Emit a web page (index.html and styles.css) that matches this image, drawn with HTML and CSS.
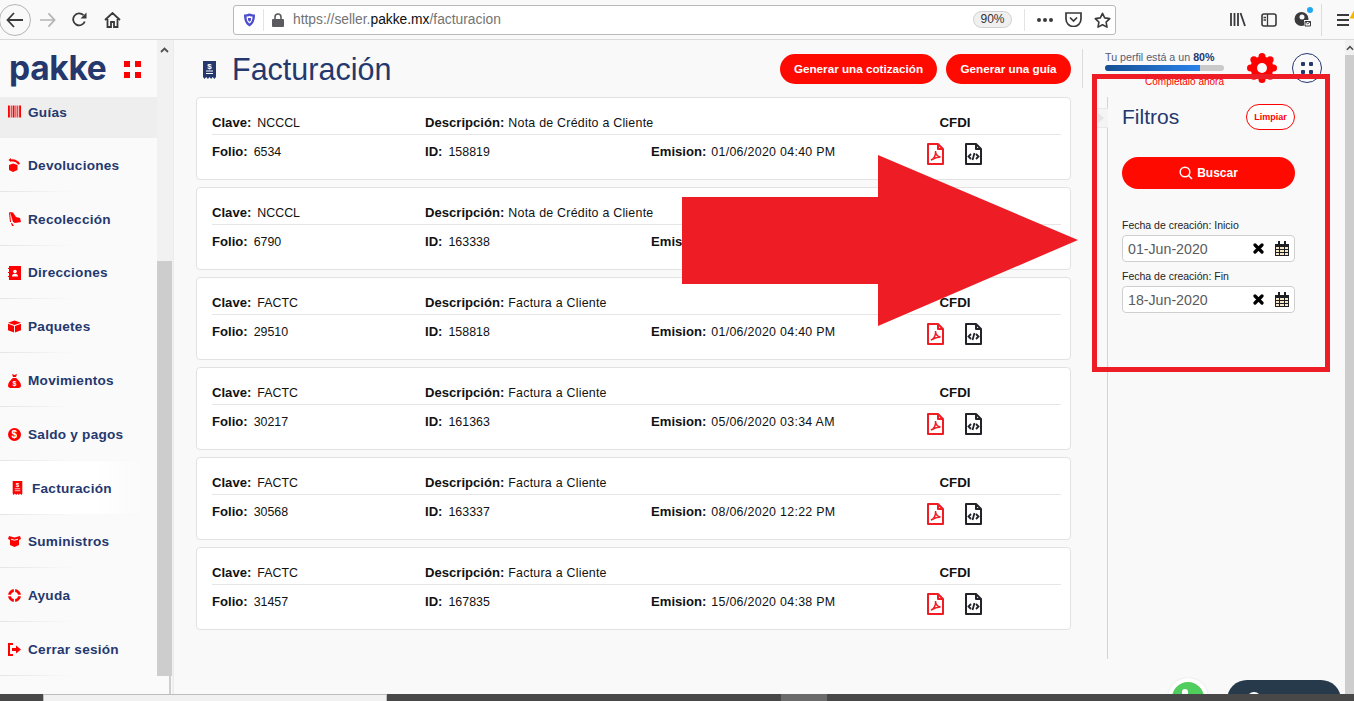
FILE: index.html
```html
<!DOCTYPE html>
<html lang="es">
<head>
<meta charset="utf-8">
<title>Facturación</title>
<link rel="stylesheet" href="styles.css">
</head>
<body>
<svg class="defs" width="0" height="0">
  <defs>
    <symbol id="pdf" viewBox="0 0 17 22">
      <path d="M1 1h10l5 5v15H1z M11 1v5h5" fill="none" stroke="currentColor" stroke-width="2" stroke-linejoin="round"/>
      <path d="M4 17c3-1 5-5 4.500-9 0 3 2 5.500 5 6-3 0-6 1-9.500 3z" fill="none" stroke="currentColor" stroke-width="1.500"/>
    </symbol>
    <symbol id="xml" viewBox="0 0 17 22">
      <path d="M1 1h10l5 5v15H1z M11 1v5h5" fill="none" stroke="currentColor" stroke-width="2" stroke-linejoin="round"/>
      <path d="M6 11l-2.500 2.500L6 16M11 11l2.500 2.500L11 16M9.500 10l-2 7" fill="none" stroke="currentColor" stroke-width="1.800"/>
    </symbol>
    <symbol id="receipt" viewBox="0 0 13 18">
      <path d="M0 0h13v16l-1.600 2-1.700-2-1.600 2-1.600-2-1.600 2-1.700-2L1.600 18 0 16z" fill="currentColor"/>
      <path d="M3 10h7M3 12.500h7" stroke="#fff" stroke-width="1"/>
      <text x="6.500" y="7.500" class="receipt-s">$</text>
    </symbol>
    <symbol id="cal" viewBox="0 0 14 15">
      <path d="M0 3h14v12H0z" fill="#1c2024"/>
      <path d="M1 6h3v2H1zM5 6h4v2H5zM10 6h3v2h-3zM1 9h3v2H1zM5 9h4v2H5zM10 9h3v2h-3zM1 12h3v2H1zM5 12h4v2H5zM10 12h3v2h-3z" fill="#f6e6c8"/>
      <path d="M3 0h2v4H3zM9 0h2v4H9z" fill="#1c2024"/>
    </symbol>
    <symbol id="cross" viewBox="0 0 11 11">
      <path d="M2 2l7 7M9 2l-7 7" stroke="#000" stroke-width="3.200" stroke-linecap="round"/>
    </symbol>
  </defs>
</svg>

<header class="toolbar">
  <div class="nav-group">
    <button class="back" aria-label="Atrás">
      <svg width="18" height="16" viewBox="0 0 18 16"><path d="M8 1L1.500 8 8 15M2 8h15" fill="none" stroke="#3a3a3c" stroke-width="1.800"/></svg>
    </button>
    <svg class="forward" width="17" height="16" viewBox="0 0 18 16"><path d="M10 1l6.500 7-6.500 7M16 8H1" fill="none" stroke="#b4b4b6" stroke-width="1.800"/></svg>
    <svg class="reload" width="15" height="15" viewBox="0 0 15 15"><path d="M12.800 9.500A6 6 0 1 1 11.500 3.200" fill="none" stroke="#3a3a3c" stroke-width="1.800"/><path d="M14.500 0.500v6h-6z" fill="#3a3a3c"/></svg>
    <svg class="home" width="17" height="16" viewBox="0 0 17 16"><path d="M1 8l7.500-7L16 8M3.500 7v8h3.500v-5h3v5h3.500V7" fill="none" stroke="#3a3a3c" stroke-width="1.800"/></svg>
  </div>
  <div class="urlbar">
    <svg class="shield" width="13" height="14" viewBox="0 0 13 14"><path d="M1 1.500C3 1.500 5 1 6.500.5 8 1 10 1.500 12 1.500c0 6-1.500 9.500-5.500 12C2.500 11 1 7.500 1 1.500z" fill="#4d4dd0"/><path d="M3.500 3.500c1 0 2-.3 3-.6 1 .3 2 .6 3 .6 0 3.500-.8 5.500-3 7-2.200-1.500-3-3.500-3-7z" fill="#fff"/><path d="M5 5h3v1.500c0 1-.5 1.700-1.500 2.300C5.500 8.200 5 7.500 5 6.500z" fill="#4d4dd0"/></svg>
    <span class="url-sep"></span>
    <svg class="lock" width="12" height="14" viewBox="0 0 12 14"><path d="M3 6V4a3 3 0 0 1 6 0v2" fill="none" stroke="#5b5b5f" stroke-width="1.600"/><rect y="6" width="12" height="8" rx="1" fill="#5b5b5f"/></svg>
    <span class="url">https://seller.<b>pakke.mx</b>/facturacion</span>
    <span class="zoom-pill">90%</span>
    <span class="url-sep url-sep-2"></span>
    <span class="dots"><i></i><i></i><i></i></span>
    <svg class="pocket" width="17" height="15" viewBox="0 0 17 15"><path d="M1 1h15v6a7.500 7.500 0 0 1-15 0z" fill="none" stroke="#3a3a3c" stroke-width="1.700"/><path d="M5 5.500l3.500 3.500L12 5.500" fill="none" stroke="#3a3a3c" stroke-width="1.700"/></svg>
    <svg class="star" width="17" height="16" viewBox="0 0 17 16"><path d="M8.500 1.300l2.200 4.600 5 .7-3.600 3.500.9 5-4.500-2.400L4 15.100l.9-5L1.300 6.600l5-.7z" fill="none" stroke="#3a3a3c" stroke-width="1.600" stroke-linejoin="round"/></svg>
  </div>
  <div class="tools">
    <svg width="16" height="15" viewBox="0 0 16 15"><path d="M1 1v13M4.500 1v13M8 1v13M10.500 1l4.500 13" fill="none" stroke="#3a3a3c" stroke-width="1.800"/></svg>
    <svg class="tool-side" width="16" height="14" viewBox="0 0 16 14"><rect x="1" y="1" width="14" height="12" rx="2" fill="none" stroke="#3a3a3c" stroke-width="1.600"/><path d="M6.500 1v12M2.500 4.500h2.500M2.500 7h2.500" stroke="#3a3a3c" stroke-width="1.300"/></svg>
    <span class="account">
      <svg width="17" height="17" viewBox="0 0 17 17"><circle cx="7.500" cy="8" r="7" fill="#3a3a3c"/><circle cx="8" cy="6" r="2.500" fill="#f9f9fa"/><path d="M10 9h7v7h-7z" fill="#f9f9fa"/><path d="M11 10.500h5.500V15H11zM11 10.500l2.700 2.300 2.800-2.300" fill="none" stroke="#3a3a3c" stroke-width="1"/></svg>
      <i class="account-dot"></i>
    </span>
    <span class="tool-sep"></span>
    <span class="hamburger"><i></i><i></i><i></i></span>
    <svg class="warn" width="14" height="13" viewBox="0 0 14 13"><path d="M7 .5l6.500 12H.5z" fill="#f4b400"/><path d="M7 4.500v4M7 9.500v1.500" stroke="#fff" stroke-width="1.400"/></svg>
  </div>
</header>

<div class="app">
  <aside class="sidebar">
    <div class="logo-row">
      <span class="logo">pakke</span>
      <span class="logo-dots"><i></i><i></i><i></i><i></i></span>
    </div>
    <nav class="menu">
      <a class="item item-first">
        <svg class="ico" width="14" height="13" viewBox="0 0 14 13"><path d="M0 0h2v13H0zM3 0h1v13H3zM5 0h2v13H5zM8 0h1v13H8zM10 0h1v13h-1zM12 0h2v13h-2z" fill="#f00"/></svg>Guías
      </a>
      <a class="item">
        <svg class="ico" width="13" height="14" viewBox="0 0 13 14"><path d="M1 2c4-2 9 0 11 3.500-.5 1-1 1-2 1C8.500 4 6 3 3.500 3.500z" fill="#f00"/><path d="M3 0v4l-2.500-2z" fill="#f00"/><path d="M1 7l4-1.500L9.500 7v5L5 14l-4-2z" fill="#f00"/></svg>Devoluciones
      </a>
      <a class="item">
        <svg class="ico" width="13" height="14" viewBox="0 0 13 14"><path d="M2 0l3 .5L8 5l4 1 1 4-6 1-2-1zM4 11l2 3-2 0-1-3zM1 1l1 9h1L2 0z" fill="#f00"/></svg>Recolección
      </a>
      <a class="item">
        <svg class="ico" width="13" height="14" viewBox="0 0 13 14"><path d="M1 0h12v14H1z" fill="#f00"/><path d="M0 2h1.500v1H0zM0 6h1.500v1H0zM0 10h1.500v1H0z" fill="#f00"/><circle cx="7" cy="5.500" r="1.800" fill="#fff"/><path d="M4 10.500c0-2 1.500-2.700 3-2.700s3 .7 3 2.700z" fill="#fff"/></svg>Direcciones
      </a>
      <a class="item">
        <svg class="ico" width="14" height="13" viewBox="0 0 14 13"><path d="M7 0l7 2.500L7 5 0 2.500z" fill="#f00"/><path d="M0 3.500l6.500 2.400V13L0 10.500zM14 3.500L7.500 5.900V13l6.500-2.500z" fill="#f00"/></svg>Paquetes
      </a>
      <a class="item">
        <svg class="ico" width="13" height="14" viewBox="0 0 13 14"><path d="M4 0l2.500 1L9 0 8 3H5z" fill="#f00"/><path d="M4.800 4h3.400C10.500 6 13 9 13 11.500 13 13 12 14 10.500 14h-8C1 14 0 13 0 11.500 0 9 2.500 6 4.800 4z" fill="#f00"/><text x="6.500" y="12.200" class="ico-dollar">$</text></svg>Movimientos
      </a>
      <a class="item">
        <svg class="ico" width="13" height="13" viewBox="0 0 13 13"><circle cx="6.500" cy="6.500" r="6.500" fill="#f00"/><text x="6.500" y="10" class="ico-dollar ico-dollar-lg">$</text></svg>Saldo y pagos
      </a>
      <a class="item item-active">
        <svg class="ico ico-active" width="11" height="14" viewBox="0 0 13 18"><use href="#receipt"/></svg>Facturación
      </a>
      <a class="item">
        <svg class="ico" width="13" height="11" viewBox="0 0 13 11"><path d="M1 0l5.500 1.500L12 0l1 3-2 1v5l-4.500 2L2 9V4L0 3z" fill="#f00"/><path d="M3 3.200l3.500 1 3.500-1" stroke="#fff" fill="none"/></svg>Suministros
      </a>
      <a class="item">
        <svg class="ico" width="13" height="13" viewBox="0 0 13 13"><circle cx="6.500" cy="6.500" r="5" fill="none" stroke="#f00" stroke-width="3"/><path d="M6.500 0v13M0 6.500h13" stroke="#fff" stroke-width="1.300"/></svg>Ayuda
      </a>
      <a class="item">
        <svg class="ico" width="13" height="13" viewBox="0 0 13 13"><path d="M5 1H1v11h4" fill="none" stroke="#f00" stroke-width="2"/><path d="M4 5h4V2.500L13 6.500l-5 4V8H4z" fill="#f00"/></svg>Cerrar sesión
      </a>
    </nav>
    <div class="side-foot"></div>
  </aside>

  <div class="side-scroll">
    <div class="track"><svg width="9" height="6" viewBox="0 0 9 6"><path d="M1 5l3.500-3.500L8 5" fill="none" stroke="#505050" stroke-width="1.800"/></svg></div>
    <div class="thumb"></div>
    <div class="corner"></div>
  </div>

  <main class="main">
    <div class="head">
      <svg class="title-icon" width="13" height="18" viewBox="0 0 13 18"><use href="#receipt"/></svg>
      <h1>Facturación</h1>
      <div class="actions">
        <a class="btn btn-quote">Generar una cotización</a>
        <a class="btn btn-guide">Generar una guía</a>
      </div>
    </div>
    <section class="cards">
      <article class="card">
        <div class="row row-top"><span class="c1"><b>Clave:</b>NCCCL</span><span class="c2"><b>Descripción:</b>Nota de Crédito a Cliente</span><span class="c4">CFDI</span></div>
        <div class="row"><span class="c1"><b>Folio:</b>6534</span><span class="c2b"><b>ID:</b>158819</span><span class="c3"><b>Emision:</b>01/06/2020 04:40 PM</span><span class="c5"><svg class="pdf"><use href="#pdf"/></svg><svg class="xml"><use href="#xml"/></svg></span></div>
      </article>
      <article class="card">
        <div class="row row-top"><span class="c1"><b>Clave:</b>NCCCL</span><span class="c2"><b>Descripción:</b>Nota de Crédito a Cliente</span><span class="c4">CFDI</span></div>
        <div class="row"><span class="c1"><b>Folio:</b>6790</span><span class="c2b"><b>ID:</b>163338</span><span class="c3"><b>Emision:</b>08/06/2020 12:22 PM</span><span class="c5"><svg class="pdf"><use href="#pdf"/></svg><svg class="xml"><use href="#xml"/></svg></span></div>
      </article>
      <article class="card">
        <div class="row row-top"><span class="c1"><b>Clave:</b>FACTC</span><span class="c2"><b>Descripción:</b>Factura a Cliente</span><span class="c4">CFDI</span></div>
        <div class="row"><span class="c1"><b>Folio:</b>29510</span><span class="c2b"><b>ID:</b>158818</span><span class="c3"><b>Emision:</b>01/06/2020 04:40 PM</span><span class="c5"><svg class="pdf"><use href="#pdf"/></svg><svg class="xml"><use href="#xml"/></svg></span></div>
      </article>
      <article class="card">
        <div class="row row-top"><span class="c1"><b>Clave:</b>FACTC</span><span class="c2"><b>Descripción:</b>Factura a Cliente</span><span class="c4">CFDI</span></div>
        <div class="row"><span class="c1"><b>Folio:</b>30217</span><span class="c2b"><b>ID:</b>161363</span><span class="c3"><b>Emision:</b>05/06/2020 03:34 AM</span><span class="c5"><svg class="pdf"><use href="#pdf"/></svg><svg class="xml"><use href="#xml"/></svg></span></div>
      </article>
      <article class="card">
        <div class="row row-top"><span class="c1"><b>Clave:</b>FACTC</span><span class="c2"><b>Descripción:</b>Factura a Cliente</span><span class="c4">CFDI</span></div>
        <div class="row"><span class="c1"><b>Folio:</b>30568</span><span class="c2b"><b>ID:</b>163337</span><span class="c3"><b>Emision:</b>08/06/2020 12:22 PM</span><span class="c5"><svg class="pdf"><use href="#pdf"/></svg><svg class="xml"><use href="#xml"/></svg></span></div>
      </article>
      <article class="card">
        <div class="row row-top"><span class="c1"><b>Clave:</b>FACTC</span><span class="c2"><b>Descripción:</b>Factura a Cliente</span><span class="c4">CFDI</span></div>
        <div class="row"><span class="c1"><b>Folio:</b>31457</span><span class="c2b"><b>ID:</b>167835</span><span class="c3"><b>Emision:</b>15/06/2020 04:38 PM</span><span class="c5"><svg class="pdf"><use href="#pdf"/></svg><svg class="xml"><use href="#xml"/></svg></span></div>
      </article>
    </section>
  </main>

  <div class="right">
    <div class="profile-row">
      <span class="v-sep"></span>
      <div class="profile">
        <p class="profile-text">Tu perfil está a un <b>80%</b></p>
        <div class="bar"><div class="bar-fill"></div></div>
        <p class="profile-link">Complétalo ahora</p>
      </div>
      <svg class="gear" width="30" height="30" viewBox="0 0 30 30">
        <circle cx="15" cy="15" r="11.500" fill="#f00"/>
        <g fill="#f00"><circle cx="26.500" cy="15" r="3.500"/><circle cx="23.130" cy="23.130" r="3.500"/><circle cx="15" cy="26.500" r="3.500"/><circle cx="6.870" cy="23.130" r="3.500"/><circle cx="3.500" cy="15" r="3.500"/><circle cx="6.870" cy="6.870" r="3.500"/><circle cx="15" cy="3.500" r="3.500"/><circle cx="23.130" cy="6.870" r="3.500"/></g>
        <circle cx="15" cy="15" r="5" fill="#f9f9f9"/>
      </svg>
      <span class="apps"><i></i><i></i><i></i><i></i></span>
    </div>
    <div class="filters">
      <div class="handle"><svg width="6" height="10" viewBox="0 0 6 10"><path d="M0 0l6 5-6 5z" fill="#e4e4e4"/></svg></div>
      <div class="filters-head">
        <h2>Filtros</h2>
        <a class="clear">Limpiar</a>
      </div>
      <a class="search">
        <svg width="14" height="14" viewBox="0 0 14 14"><circle cx="6" cy="6" r="4.800" fill="none" stroke="#fff" stroke-width="1.500"/><path d="M9.500 9.500l3.500 3.500" stroke="#fff" stroke-width="1.600"/></svg>Buscar
      </a>
      <label class="lab lab-first">Fecha de creación: Inicio</label>
      <div class="date"><span class="date-val">01-Jun-2020</span><svg class="x" width="11" height="11"><use href="#cross"/></svg><svg width="14" height="15"><use href="#cal"/></svg></div>
      <label class="lab">Fecha de creación: Fin</label>
      <div class="date"><span class="date-val">18-Jun-2020</span><svg class="x" width="11" height="11"><use href="#cross"/></svg><svg width="14" height="15"><use href="#cal"/></svg></div>
    </div>
  </div>

  <div class="page-scroll">
    <div class="page-track"><svg width="9" height="6" viewBox="0 0 9 6"><path d="M1 5l3.500-3.500L8 5" fill="none" stroke="#505050" stroke-width="1.800"/></svg></div>
    <div class="page-thumb"></div>
  </div>
</div>

<footer class="bottom">
  <span class="b-dark"></span>
  <span class="b-light"></span>
  <span class="b-rest"><i class="b-chip"></i></span>
</footer>

<div class="whatsapp"><span><i></i></span></div>
<div class="chat"><i></i></div>

<svg class="arrow" width="400" height="175" viewBox="0 0 400 175"><path d="M0 42h196V0l200 85-200 86v-42H0z" fill="#ee1c25"/></svg>
<div class="annot"></div>
</body>
</html>
```
FILE: styles.css
```css
* { box-sizing: border-box; }
html, body { margin: 0; height: 100%; overflow: hidden; }
body {
  width: 1354px;
  height: 701px;
  display: flex;
  flex-direction: column;
  position: relative;
  font-family: "Liberation Sans", Arial, sans-serif;
  color: #1b1b1b;
  background: #f9f9f9;
}
p, h1, h2 { margin: 0; font-weight: 400; }
a { display: block; }
.defs { position: absolute; }
.receipt-s { font: 700 8px "Liberation Sans", sans-serif; fill: #fff; text-anchor: middle; }
.ico-dollar { font: 700 7px "Liberation Sans", sans-serif; fill: #fff; text-anchor: middle; }
.ico-dollar-lg { font-size: 10px; }

/* Browser chrome */
.toolbar {
  height: 40px;
  flex: none;
  display: flex;
  align-items: center;
  background: #f9f9fa;
  border-bottom: 1px solid #d9d9db;
}
.nav-group { width: 233px; flex: none; display: flex; align-items: center; }
.back {
  width: 32px;
  height: 32px;
  margin-left: -1px;
  padding: 0;
  display: flex;
  align-items: center;
  justify-content: center;
  background: #f9f9fa;
  border: 1px solid #b5b5b6;
  border-radius: 50%;
}
.forward { margin-left: 8px; }
.reload { margin-left: 16px; }
.home { margin-left: 17px; }
.urlbar {
  width: 883px;
  height: 30px;
  flex: none;
  display: flex;
  align-items: center;
  padding-left: 9px;
  background: #fff;
  border: 1px solid #b9b9bb;
  border-radius: 3px;
}
.url-sep { width: 1px; height: 22px; margin-left: 7px; background: #e4e4e6; }
.lock { margin-left: 8px; }
.url { width: 680px; margin-left: 9px; font-size: 13.8px; color: #737373; white-space: nowrap; }
.url b { font-weight: 400; color: #0c0c0d; }
.zoom-pill {
  width: 39px;
  height: 17px;
  font-size: 12px;
  line-height: 15px;
  text-align: center;
  color: #333;
  background: #f0f0f1;
  border: 1px solid #cfcfd1;
  border-radius: 9px;
}
.url-sep-2 { margin-left: 12px; }
.dots { display: flex; gap: 2px; margin-left: 12px; }
.dots i { width: 4px; height: 4px; border-radius: 50%; background: #3a3a3c; }
.pocket { margin-left: 12px; }
.star { margin-left: 12px; }
.tools { flex: 1; display: flex; align-items: center; padding-left: 114px; position: relative; }
.tool-side { margin-left: 15px; }
.account { position: relative; margin-left: 17px; display: flex; }
.account-dot {
  position: absolute;
  top: -4px;
  right: -2px;
  width: 6px;
  height: 6px;
  border-radius: 50%;
  background: #1fa8f1;
}
.tool-sep { width: 1px; height: 32px; margin-left: 10px; background: #dddde0; }
.hamburger { display: flex; flex-direction: column; gap: 3px; margin-left: 15px; }
.hamburger i { width: 12px; height: 2px; background: #3a3a3c; }
.warn { position: absolute; right: -9px; top: 2px; }

/* App frame */
.app { height: 654px; flex: none; display: flex; }
.sidebar {
  width: 157px;
  flex: none;
  display: flex;
  flex-direction: column;
  background: #fafafa;
}
.logo-row { height: 57px; flex: none; display: flex; align-items: center; padding-left: 9px; }
.logo {
  width: 115px;
  font: 700 33.5px/1 "Inter", "Liberation Sans", sans-serif;
  letter-spacing: -.3px;
  color: #24386e;
}
.logo-dots { display: grid; grid-template-columns: 6px 6px; gap: 5px; margin-top: 1px; }
.logo-dots i { width: 6px; height: 6px; background: #f00; }
.menu { display: flex; flex-direction: column; }
.item {
  height: 53.8px;
  display: flex;
  align-items: center;
  padding: 2px 0 0 8px;
  font-size: 13.6px;
  font-weight: 700;
  letter-spacing: .25px;
  color: #24386e;
  border-bottom: 1px solid;
  border-image: linear-gradient(90deg, #e4e4e4, #f9f9f9 45%) 1;
}
.item-first {
  height: 41px;
  background: #eeeeee;
  border: 0;
  align-items: flex-start;
  padding-top: 8px;
}
.item-active {
  padding-left: 12px;
  background: linear-gradient(90deg, #fff 60%, #fafafa 90%);
}
.ico { width: 13px; margin-right: 7px; flex: none; }
.ico-active { width: 11px; margin-right: 9px; color: #f00; }
.side-foot { flex: 1; background: #fafafa; }

.side-scroll {
  width: 16px;
  flex: none;
  display: flex;
  flex-direction: column;
  background: #fafafa;
  border-right: 1px solid #f0f0f0;
}
.track {
  height: 221px;
  flex: none;
  padding: 7px 0 0 3px;
  display: flex;
  align-items: flex-start;
  background: #f1f1f1;
  margin-right: -1px;
}
.thumb { height: 415px; flex: none; background: #cdcdcd; }
.corner { flex: 1; width: 14px; border-right: 2px solid #cdcdcd; }

/* Main */
.main {
  width: 900px;
  flex: none;
  padding: 0 0 0 22px;
  background: #f9f9f9;
  border-left: 1px solid #ececec;
}
.head { height: 57px; width: 875px; display: flex; align-items: center; }
.title-icon { margin-left: 7px; color: #24386e; flex: none; margin-top: 3px; }
h1 { margin-left: 16px; font-size: 30.5px; line-height: 1; color: #24386e; margin-top: 2px; }
.actions { margin-left: auto; display: flex; gap: 9px; margin-top: 1px; }
.btn {
  height: 30px;
  border-radius: 15px;
  background: #ff0a00;
  color: #fff;
  font-size: 11.7px;
  font-weight: 700;
  line-height: 30px;
  text-align: center;
}
.btn-quote { width: 157px; }
.btn-guide { width: 125px; }
.cards { display: flex; flex-direction: column; gap: 7px; width: 875px; }
.card {
  height: 83px;
  padding: 15px 9px 0 15px;
  background: #fff;
  border: 1px solid #e2e2e2;
  border-radius: 4px;
}
.row { display: flex; align-items: center; font-size: 12.4px; color: #111; }
.row b { font-size: 13.1px; margin-right: 6px; letter-spacing: 0; }
.row-top { height: 22px; border-bottom: 1px solid #e6e6e6; padding-bottom: 2px; }
.row:not(.row-top) { height: 32px; }
.c1 { width: 213px; flex: none; }
.c2 { width: 454px; flex: none; letter-spacing: .24px; }
.c2 b { margin-right: 4px; }
.c2b { width: 226px; flex: none; }
.c3 { width: 228px; flex: none; letter-spacing: .3px; }
.c3 b { margin-right: 5px; }
.c4 { width: 62px; flex: none; text-align: center; font-size: 13.3px; font-weight: 700; padding-left: 2px; margin-left: 44px; }
.c5 { display: flex; align-items: center; gap: 21px; margin-left: 48px; padding-top: 6px; }
.pdf { width: 17px; height: 22px; color: #f01d24; }
.xml { width: 17px; height: 22px; color: #22242a; }

/* Right column */
.right { width: 272px; flex: none; display: flex; flex-direction: column; background: #f9f9f9; }
.profile-row { height: 57px; flex: none; display: flex; align-items: flex-start; padding-top: 9px; position: relative; }
.v-sep { width: 1px; height: 39px; background: #dcdcdc; margin-left: 9px; margin-right: 22px; flex: none; }
.profile { width: 119px; flex: none; margin-top: 2px; }
.profile-text { font-size: 10.7px; line-height: 13px; color: #555d75; white-space: nowrap; }
.profile-text b { color: #24386e; }
.bar { width: 119px; height: 6px; margin-top: 1px; background: #cacaca; border-radius: 3px; overflow: hidden; }
.bar-fill { width: 95px; height: 6px; background: linear-gradient(90deg, #154f92, #2a83ec); }
.profile-link { margin-top: 5px; text-align: right; color: #f00; font-size: 10px; line-height: 12px; white-space: nowrap; }
.gear { margin: 4px 0 0 23px; flex: none; }
.apps {
  width: 30px;
  height: 30px;
  margin: 4px 0 0 15px;
  display: grid;
  grid-template-columns: 4px 4px;
  gap: 4px;
  align-content: center;
  justify-content: center;
  border: 1.5px solid #24386e;
  border-radius: 50%;
  flex: none;
}
.apps i { width: 4px; height: 4px; background: #24386e; border-radius: 1px; }
.filters {
  flex: none;
  height: 562px;
  margin-left: 34px;
  padding: 7px 0 0 14px;
  width: 188px;
  position: relative;
  border-left: 1px solid #d4d4d4;
}
.handle {
  position: absolute;
  left: -16px;
  top: 11px;
  width: 16px;
  height: 20px;
  display: flex;
  align-items: center;
  justify-content: center;
  background: #f4f4f4;
  border: 1px solid #e8e8e8;
  border-right: 0;
  border-radius: 3px 0 0 3px;
}
.filters-head { height: 26px; width: 173px; display: flex; align-items: center; justify-content: space-between; }
h2 { font-size: 21px; color: #24386e; }
.clear {
  width: 49px;
  height: 26px;
  border: 1px solid #f00;
  border-radius: 13px;
  background: #fff;
  color: #f00;
  font-size: 9px;
  font-weight: 700;
  line-height: 24px;
  text-align: center;
}
.search {
  width: 173px;
  height: 32px;
  margin-top: 27px;
  display: flex;
  align-items: center;
  justify-content: center;
  gap: 4px;
  background: #ff0a00;
  border-radius: 16px;
  color: #fff;
  font-size: 12px;
  font-weight: 700;
}
.lab { display: block; font-size: 10.5px; line-height: 12px; color: #222; margin: 8px 0 4px; }
.lab-first { margin-top: 30px; }
.date {
  width: 173px;
  height: 27px;
  display: flex;
  align-items: center;
  padding: 0 5px 0 5px;
  background: #fff;
  border: 1px solid #cfcfcf;
  border-radius: 4px;
}
.date-val { font-size: 14.2px; color: #5b5b5b; flex: 1; }
.x { margin-right: 11px; }
.page-scroll { width: 9px; margin-left: auto; flex: none; display: flex; flex-direction: column; }
.page-track { height: 15px; background: #f1f1f1; padding: 5px 0 0 1px; display: flex; align-items: flex-start; overflow: hidden; }
.page-thumb { flex: 1; background: #cdcdcd; }

/* Bottom strip */
.bottom { height: 7px; flex: none; display: flex; position: relative; z-index: 3; background: #484848; }
.b-dark { width: 43px; flex: none; }
.b-light { width: 344px; flex: none; background: #f1f1f1; border: 1px solid #bdbdbd; border-bottom: 0; }
.b-rest { flex: 1; padding-left: 394px; }
.b-chip { display: block; width: 46px; height: 7px; background: #6b6b6b; }

/* Overlays */
.whatsapp {
  position: absolute;
  left: 1168px;
  top: 678px;
  width: 40px;
  height: 40px;
  padding: 4px;
  background: #fff;
  box-shadow: 0 0 2px #ddd;
  border-radius: 50%;
  z-index: 2;
}
.whatsapp span { display: block; position: relative; width: 32px; height: 32px; background: #4fce5d; border-radius: 50%; }
.whatsapp i { position: absolute; left: 10px; top: 7px; width: 6px; height: 9px; background: #fff; border-radius: 3px; }
.chat {
  position: absolute;
  left: 1227px;
  top: 680px;
  width: 114px;
  height: 40px;
  background: #263a4b;
  border-radius: 20px 20px 0 0;
  z-index: 2;
}
.chat i { position: absolute; left: 20px; top: 12px; width: 14px; height: 14px; background: #fff; border-radius: 50%; }
.arrow { position: absolute; left: 682px; top: 155px; z-index: 4; }
.annot {
  position: absolute;
  left: 1092px;
  top: 74px;
  width: 238px;
  height: 298px;
  border: 5px solid #ee1c25;
  z-index: 4;
}
```
